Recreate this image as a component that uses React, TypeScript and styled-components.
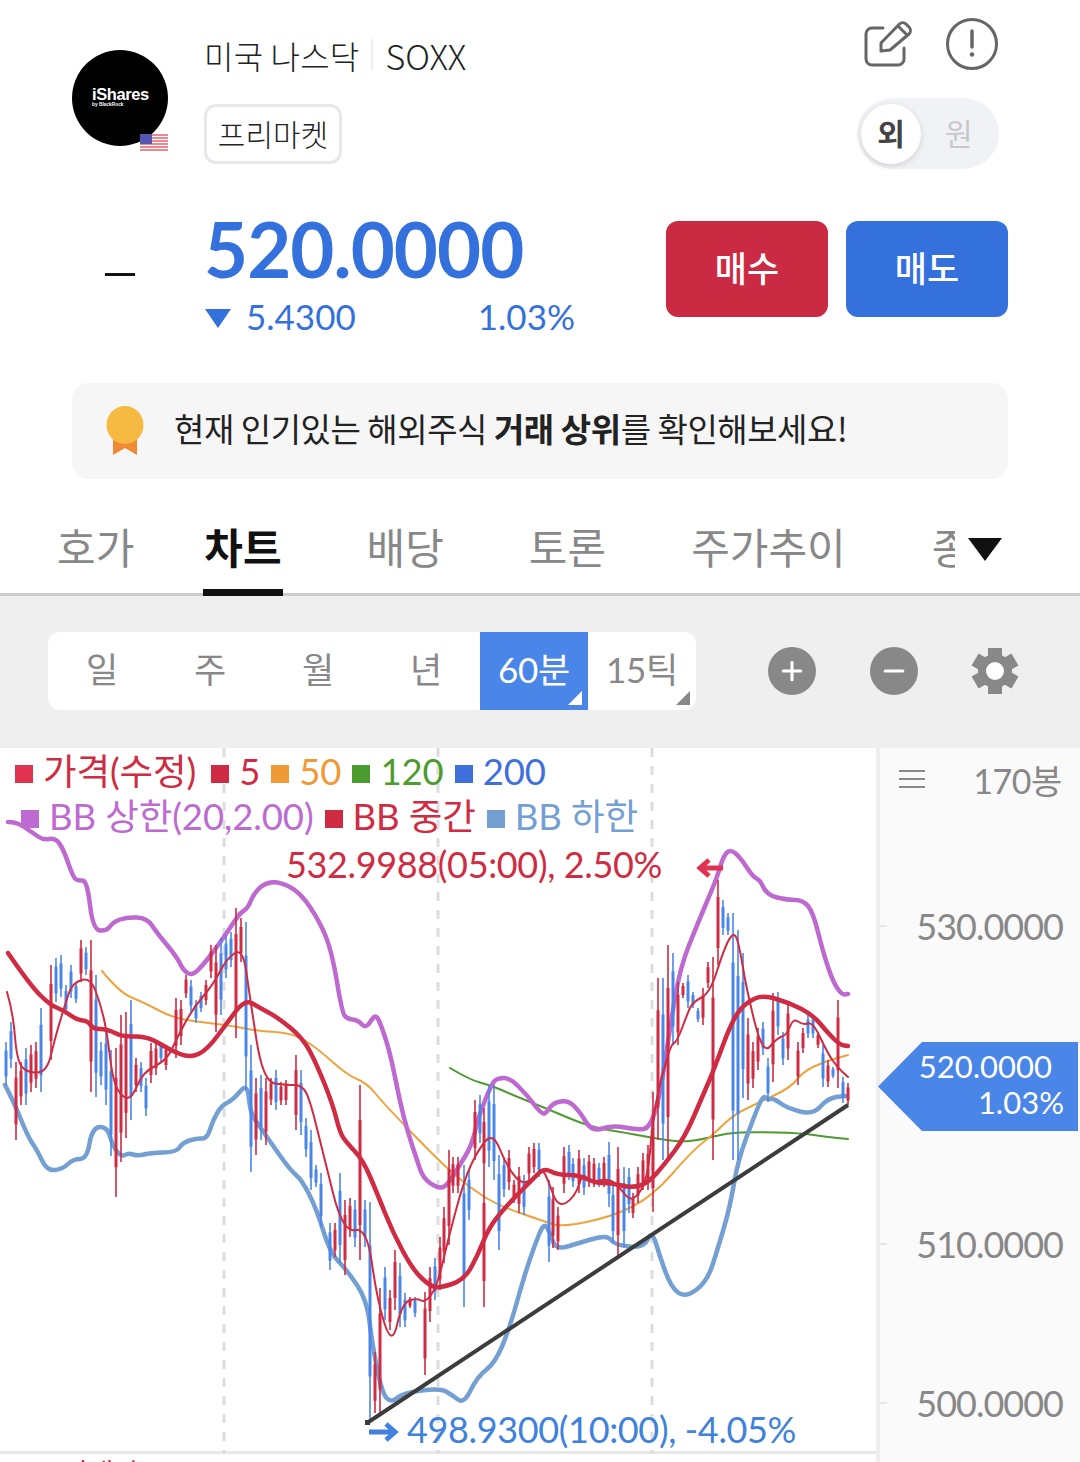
import styled, { createGlobalStyle } from 'styled-components';
import { Plus, Minus } from 'lucide-react';

const RED = '#cf2b43';
const BLUE = '#3471dc';
const SKY = '#4a86e8';
const GREY = '#888888';

const GlobalStyle = createGlobalStyle`
    html, body {
        margin: 0;
        padding: 0;
        background: #ffffff;
    }
    body {
        font-family: Lato, "Noto Sans CJK KR", sans-serif;
        color: #222222;
    }
    * {
        box-sizing: border-box;
    }
`;

const Page = styled.div`
    width: 1080px;
    height: 1462px;
    overflow: hidden;
    background: #ffffff;
`;

const TopSection = styled.section`
    padding: 0 72px;
`;

const HeaderRow = styled.div`
    display: flex;
    height: 170px;
`;

const Logo = styled.div`
    position: relative;
    width: 96px;
    height: 96px;
    margin-top: 50px;
    border-radius: 50%;
    background: #000000;
    color: #ffffff;
    display: flex;
    flex-direction: column;
    justify-content: center;
    padding: 0 0 3px 20px;
`;

const LogoName = styled.span`
    font-family: "Liberation Sans", sans-serif;
    font-weight: 700;
    font-size: 16.500px;
    line-height: 16px;
    letter-spacing: -0.4px;
`;

const LogoSub = styled.span`
    font-family: "Liberation Sans", sans-serif;
    font-weight: 700;
    font-size: 4.800px;
    line-height: 6px;
`;

const FlagBadge = styled.svg`
    position: absolute;
    right: 0;
    bottom: -5px;
    width: 28px;
    height: 17px;
`;

const Info = styled.div`
    margin-left: 36px;
    padding-top: 36px;
`;

const Title = styled.div`
    display: flex;
    align-items: center;
    height: 38px;
    font-family: "Noto Sans CJK KR", sans-serif;
    font-weight: 300;
    font-size: 32px;
    letter-spacing: 0.2px;
    color: #222222;
`;

const TitleCode = styled.span`
    font-size: 34px;
    letter-spacing: 0;
`;

const TitleDivider = styled.span`
    width: 2px;
    height: 32px;
    margin: 0 12px 0 12px;
    background: #eeeeee;
`;

const SessionTag = styled.div`
    display: inline-flex;
    align-items: center;
    justify-content: center;
    width: 138px;
    height: 60px;
    margin-top: 30px;
    padding-bottom: 3px;
    border: 3px solid #e8e8e8;
    border-radius: 12px;
    font-family: "Noto Sans CJK KR", sans-serif;
    font-weight: 300;
    font-size: 30px;
    letter-spacing: 0;
`;

const HeaderSide = styled.div`
    margin-left: auto;
    margin-right: 9px;
    padding-top: 17px;
    display: flex;
    flex-direction: column;
    align-items: flex-end;
`;

const IconRow = styled.div`
    display: flex;
    align-items: center;
    gap: 31px;
    height: 54px;
`;

const CurrencyToggle = styled.div`
    position: relative;
    display: flex;
    align-items: center;
    width: 142px;
    height: 71px;
    margin-top: 27px;
    padding-left: 4px;
    border-radius: 36px;
    background: #f1f2f5;
    font-family: "Noto Sans CJK KR", sans-serif;
    font-size: 30px;
`;

const ToggleKnob = styled.div`
    width: 60px;
    height: 60px;
    padding-bottom: 4px;
    border-radius: 50%;
    background: #ffffff;
    box-shadow: 0 2px 6px rgba(0, 0, 0, 0.14);
    display: flex;
    align-items: center;
    justify-content: center;
    font-weight: 700;
    color: #444444;
`;

const ToggleOff = styled.span`
    margin: 0 0 4px 24px;
    color: #c6c8cc;
`;

const PriceRow = styled.div`
    display: flex;
    margin-top: 51px;
    height: 96px;
`;

const FlatDash = styled.div`
    width: 30px;
    height: 3px;
    margin: 52px 69px 0 33px;
    background: #111111;
`;

const PriceBlock = styled.div`
    display: flex;
    flex-direction: column;
    color: ${BLUE};
`;

const Price = styled.div`
    font-weight: 700;
    font-size: 76px;
    line-height: 56px;
    letter-spacing: -0.9px;
`;

const Change = styled.div`
    display: flex;
    align-items: center;
    height: 40px;
    margin-top: 19px;
    font-size: 35px;
`;

const DownMark = styled.span`
    width: 0;
    height: 0;
    margin: 4px 15px 0 1px;
    border-left: 13px solid transparent;
    border-right: 13px solid transparent;
    border-top: 19px solid ${BLUE};
`;

const ChangeRate = styled.span`
    margin-left: 122px;
`;

const OrderButtons = styled.div`
    display: flex;
    gap: 18px;
    margin-left: auto;
`;

const OrderButton = styled.button<{ $color: string }>`
    width: 162px;
    height: 96px;
    padding: 0 0 6px;
    border: none;
    border-radius: 12px;
    background: ${(p) => p.$color};
    color: #ffffff;
    font-family: "Noto Sans CJK KR", sans-serif;
    font-weight: 500;
    font-size: 35px;
`;

const Banner = styled.div`
    display: flex;
    align-items: center;
    height: 96px;
    margin-top: 66px;
    padding-left: 34px;
    border-radius: 16px;
    background: #f6f6f6;
    font-family: "Noto Sans CJK KR", sans-serif;
    font-size: 33px;
    font-weight: 400;
    letter-spacing: -0.45px;
    color: #222222;
`;

const BannerText = styled.span`
    margin: 0 0 6px 28px;
    b {
        font-weight: 700;
    }
`;

const Tabs = styled.nav`
    position: relative;
    display: flex;
    align-items: flex-start;
    gap: 81px;
    height: 99px;
    margin-top: 18px;
    padding: 21px 0 0 55px;
    border-bottom: 3px solid #cccccc;
`;

const Tab = styled.div<{ $active?: boolean }>`
    height: 78px;
    padding: 0 ${(p) => (p.$active ? 1 : 2)}px;
    margin: 0 ${(p) => (p.$active ? 1 : 0)}px;
    white-space: nowrap;
    font-family: "Noto Sans CJK KR", sans-serif;
    font-weight: ${(p) => (p.$active ? 700 : 400)};
    font-size: 42px;
    line-height: 55px;
    color: ${(p) => (p.$active ? '#111111' : GREY)};
    border-bottom: ${(p) => (p.$active ? '7px solid #111111' : 'none')};
    &:first-child {
        margin-right: -15px;
    }
`;

const ClippedTab = styled(Tab)`
    width: 26px;
    overflow: hidden;
    padding: 0 0 0 3px;
`;

const MoreMark = styled.span`
    position: absolute;
    left: 968px;
    top: 41px;
    width: 0;
    height: 0;
    border-left: 17px solid transparent;
    border-right: 17px solid transparent;
    border-top: 23px solid #111111;
`;

const Toolbar = styled.div`
    display: flex;
    align-items: center;
    height: 152px;
    padding: 0 48px 2px;
    background: #efefef;
`;

const Periods = styled.div`
    display: flex;
    height: 78px;
    border-radius: 12px;
    background: #ffffff;
    overflow: hidden;
`;

const Period = styled.div<{ $active?: boolean; $menu?: boolean }>`
    position: relative;
    width: 108px;
    display: flex;
    align-items: center;
    justify-content: center;
    padding-bottom: 7px;
    font-family: Lato, "Noto Sans CJK KR", sans-serif;
    font-size: 35px;
    letter-spacing: -0.3px;
    background: ${(p) => (p.$active ? SKY : 'transparent')};
    color: ${(p) => (p.$active ? '#ffffff' : GREY)};
    &::after {
        content: '';
        display: ${(p) => (p.$menu ? 'block' : 'none')};
        position: absolute;
        right: 6px;
        bottom: 5px;
        width: 14px;
        height: 14px;
        background: ${(p) => (p.$active ? '#ffffff' : GREY)};
        clip-path: polygon(100% 0, 100% 100%, 0 100%);
    }
`;

const ZoomButton = styled.button<{ $gap: number }>`
    width: 48px;
    height: 48px;
    margin-left: ${(p) => p.$gap}px;
    padding: 0;
    border: none;
    border-radius: 50%;
    background: ${GREY};
    color: #ffffff;
    display: flex;
    align-items: center;
    justify-content: center;
`;

const GearSlot = styled.div`
    margin-left: 53px;
    height: 48px;
`;

const ChartArea = styled.div`
    display: flex;
    height: 714px;
`;

const ChartPane = styled.div`
    width: 876px;
    background: #ffffff;
`;

const Plot = styled.div`
    position: relative;
    height: 706px;
    border-bottom: 3px solid #e8e8e8;
`;

const PlotSvg = styled.svg`
    position: absolute;
    left: 0;
    top: 0;
    display: block;
`;

const Legend = styled.div`
    position: absolute;
    left: 15px;
    top: 1px;
    display: flex;
    flex-direction: column;
    font-size: 36.500px;
    line-height: 45px;
    letter-spacing: -0.1px;
`;

const LegendRow = styled.div<{ $indent?: number; $lead?: number }>`
    display: flex;
    gap: 11px;
    padding-left: ${(p) => p.$indent ?? 0}px;
    & > :first-child {
        margin-right: ${(p) => p.$lead ?? 0}px;
    }
`;

const LegendItem = styled.div<{ $color: string; $mark?: string }>`
    display: flex;
    align-items: center;
    gap: 10px;
    color: ${(p) => p.$color};
    white-space: nowrap;
    &::before {
        content: '';
        width: 18px;
        height: 18px;
        margin-top: 4px;
        background: ${(p) => p.$mark ?? p.$color};
    }
`;

const Extreme = styled.div<{ $color: string; $left: number; $top: number }>`
    position: absolute;
    left: ${(p) => p.$left}px;
    top: ${(p) => p.$top}px;
    color: ${(p) => p.$color};
    font-size: 36px;
    line-height: 44px;
    letter-spacing: -0.35px;
    white-space: nowrap;
`;

const SubPaneLabel = styled.div`
    margin: -2px 0 0 62px;
    font-family: "Noto Sans CJK KR", sans-serif;
    font-size: 28px;
    line-height: 40px;
    color: ${RED};
`;

const AxisPane = styled.div`
    position: relative;
    width: 204px;
    border-left: 4px solid #eeeeee;
    background: #fafafa;
    color: ${GREY};
`;

const AxisHead = styled.div`
    display: flex;
    align-items: center;
    height: 62px;
    padding: 0 18px 0 19px;
    justify-content: space-between;
    font-size: 34px;
    letter-spacing: -0.4px;
`;

const AxisLabel = styled.div<{ $y: number }>`
    position: absolute;
    right: 17px;
    top: ${(p) => p.$y - 23}px;
    font-size: 36px;
    line-height: 44px;
    letter-spacing: -1px;
`;

const AxisTick = styled.span<{ $y: number }>`
    position: absolute;
    left: 0;
    top: ${(p) => p.$y - 1}px;
    width: 7px;
    height: 2px;
    background: #e6e6e6;
`;

const PriceTag = styled.div`
    position: absolute;
    left: -2px;
    top: 294px;
    width: 200px;
    height: 89px;
    padding: 6px 14px 0 0;
    background: ${SKY};
    clip-path: polygon(0 50%, 44px 0, 100% 0, 100% 100%, 44px 100%);
    color: #ffffff;
    font-size: 31px;
    line-height: 36px;
    text-align: right;
`;

const PriceTagValue = styled.div`
    margin-right: 12px;
`;

type Candle = [number, number, number, 'r' | 'b'];

const candles: Candle[] = [
    [6, 1042, 1085, 'b'], [11, 1022, 1068, 'b'], [16, 1062, 1140, 'r'], [21, 1062, 1105, 'r'], [26, 1048, 1105, 'b'],
    [31, 1045, 1092, 'r'], [36, 1042, 1088, 'r'], [41, 1008, 1092, 'b'], [51, 965, 1060, 'r'], [56, 958, 1002, 'b'],
    [61, 955, 997, 'b'], [66, 985, 1015, 'b'], [71, 965, 998, 'b'], [76, 982, 1003, 'b'], [81, 940, 982, 'r'],
    [86, 947, 975, 'b'], [91, 940, 1092, 'r'], [96, 975, 1097, 'b'], [101, 1042, 1085, 'b'], [106, 1028, 1105, 'b'],
    [111, 1050, 1156, 'b'], [116, 1048, 1197, 'r'], [121, 1015, 1162, 'r'], [126, 1012, 1138, 'r'], [131, 1000, 1120, 'b'],
    [136, 1058, 1092, 'r'], [141, 1062, 1092, 'b'], [146, 1078, 1116, 'b'], [151, 1043, 1083, 'r'], [156, 1042, 1075, 'r'],
    [161, 1042, 1062, 'b'], [166, 1045, 1070, 'r'], [176, 998, 1058, 'r'], [181, 1000, 1045, 'r'], [186, 975, 998, 'r'],
    [191, 980, 1012, 'b'], [196, 1000, 1023, 'b'], [201, 992, 1012, 'b'], [206, 980, 1005, 'r'], [211, 945, 978, 'r'],
    [216, 945, 1032, 'r'], [221, 938, 1015, 'b'], [226, 935, 978, 'b'], [231, 932, 967, 'b'], [236, 908, 1038, 'r'],
    [241, 918, 962, 'r'], [246, 922, 1090, 'b'], [251, 1045, 1172, 'b'], [256, 1078, 1155, 'r'], [261, 1075, 1140, 'b'],
    [266, 1078, 1145, 'r'], [271, 1078, 1105, 'r'], [276, 1070, 1110, 'b'], [281, 1082, 1105, 'r'], [286, 1080, 1105, 'r'],
    [296, 1055, 1130, 'r'], [301, 1070, 1135, 'b'], [306, 1118, 1157, 'b'], [311, 1130, 1190, 'b'], [316, 1165, 1187, 'b'],
    [321, 1173, 1227, 'b'], [330, 1223, 1270, 'b'], [335, 1223, 1257, 'r'], [340, 1173, 1263, 'b'], [345, 1200, 1275, 'r'],
    [350, 1198, 1237, 'r'], [355, 1200, 1247, 'b'], [360, 1085, 1260, 'r'], [365, 1200, 1247, 'b'], [370, 1202, 1420, 'b'],
    [375, 1352, 1413, 'r'], [380, 1288, 1415, 'r'], [385, 1267, 1320, 'b'], [390, 1290, 1330, 'r'], [395, 1250, 1310, 'r'],
    [400, 1263, 1327, 'b'], [405, 1293, 1327, 'b'], [410, 1297, 1308, 'r'], [415, 1297, 1317, 'b'], [425, 1292, 1375, 'r'],
    [430, 1267, 1322, 'r'], [435, 1258, 1300, 'b'], [440, 1237, 1290, 'r'], [444, 1207, 1263, 'r'], [449, 1150, 1245, 'r'],
    [453, 1157, 1193, 'r'], [458, 1157, 1193, 'r'], [464, 1165, 1307, 'b'], [469, 1170, 1220, 'b'], [475, 1100, 1160, 'r'],
    [480, 1095, 1143, 'b'], [484, 1177, 1307, 'r'], [484, 1108, 1177, 'r'], [489, 1085, 1167, 'b'], [494, 1085, 1180, 'b'],
    [499, 1155, 1250, 'b'], [504, 1157, 1197, 'b'], [509, 1150, 1190, 'r'], [514, 1180, 1203, 'r'], [519, 1167, 1213, 'r'],
    [524, 1175, 1215, 'b'], [529, 1147, 1180, 'r'], [534, 1143, 1173, 'r'], [539, 1143, 1177, 'b'], [549, 1180, 1262, 'b'],
    [553, 1187, 1248, 'r'], [558, 1207, 1250, 'r'], [564, 1147, 1193, 'r'], [569, 1145, 1180, 'b'], [573, 1158, 1187, 'b'],
    [579, 1150, 1193, 'r'], [584, 1158, 1195, 'b'], [589, 1155, 1187, 'r'], [594, 1158, 1187, 'r'], [599, 1163, 1187, 'b'],
    [604, 1157, 1187, 'r'], [609, 1142, 1207, 'b'], [613, 1183, 1243, 'b'], [618, 1147, 1257, 'r'], [624, 1167, 1247, 'b'],
    [629, 1168, 1213, 'b'], [633, 1193, 1218, 'r'], [638, 1167, 1203, 'r'], [643, 1153, 1190, 'r'], [648, 1145, 1190, 'r'],
    [653, 1092, 1212, 'r'], [658, 978, 1140, 'r'], [663, 978, 1160, 'b'], [668, 945, 1160, 'r'], [673, 953, 1045, 'b'],
    [678, 982, 1045, 'r'], [683, 983, 998, 'r'], [688, 975, 1008, 'b'], [693, 992, 1008, 'b'], [698, 1008, 1022, 'b'],
    [703, 988, 1025, 'r'], [708, 962, 988, 'r'], [713, 957, 1160, 'r'], [718, 880, 965, 'r'], [723, 900, 935, 'b'],
    [728, 913, 935, 'b'], [733, 913, 1160, 'b'], [738, 930, 1160, 'b'], [743, 953, 1098, 'b'], [748, 1018, 1100, 'r'],
    [753, 1042, 1088, 'r'], [758, 1028, 1070, 'r'], [763, 1022, 1055, 'b'], [768, 1058, 1102, 'b'], [773, 993, 1082, 'r'],
    [778, 992, 1035, 'b'], [783, 1032, 1065, 'b'], [788, 1002, 1060, 'r'], [798, 1042, 1085, 'r'], [803, 1028, 1053, 'r'],
    [808, 1015, 1038, 'b'], [813, 1015, 1038, 'b'], [818, 1032, 1048, 'r'], [823, 1045, 1087, 'b'], [828, 1060, 1087, 'r'],
    [833, 1067, 1078, 'b'], [838, 1000, 1088, 'r'], [843, 1077, 1103, 'b'], [848, 1083, 1105, 'r'],
];

const bbUpper = '8,822 17,822 33,833 43,840 55,838 63,848 73,877 78,881 87,880 93,930 107,931 113,922 127,917 147,918 157,933 177,957 183,970 192,976 203,965 217,947 230,928 240,913 248,908 253,895 263,884 278,881 300,892 320,922 332,952 342,1012 347,1019 358,1020 366,1029 375,1014 380,1022 390,1052 400,1102 408,1133 417,1160 423,1178 437,1188 446,1187 458,1168 472,1145 478,1118 492,1083 498,1078 510,1078 527,1095 542,1115 547,1112 553,1103 568,1100 580,1112 592,1132 613,1125 637,1130 650,1128 660,1095 670,1028 680,968 697,925 717,878 723,857 730,849 740,857 753,877 760,880 767,895 787,900 803,900 813,912 823,952 833,982 842,995 848,994';
const bbMiddle = '8,953 30,985 50,1005 63,1010 77,1020 88,1021 93,1029 107,1029 123,1037 147,1036 170,1050 190,1058 207,1050 227,1023 245,999 260,1008 277,1017 303,1038 317,1065 333,1105 340,1133 347,1143 363,1160 377,1193 393,1233 413,1270 430,1286 440,1288 464,1280 477,1257 489,1227 509,1203 534,1178 544,1168 558,1175 579,1175 595,1183 611,1183 632,1188 648,1183 664,1165 685,1137 703,1095 713,1072 733,1018 747,1002 763,995 790,1003 813,1015 827,1032 840,1045 848,1046';
const bbLower = '5,1085 13,1100 28,1137 37,1150 47,1171 63,1169 73,1159 87,1159 92,1128 107,1126 113,1147 122,1157 128,1153 138,1156 150,1153 177,1152 182,1143 197,1138 207,1139 213,1120 222,1105 233,1100 247,1083 250,1108 253,1117 267,1137 290,1170 302,1180 317,1210 330,1253 347,1270 367,1300 372,1343 382,1393 391,1403 403,1393 440,1388 452,1395 464,1404 477,1377 495,1363 509,1330 524,1277 534,1247 544,1222 550,1233 556,1250 579,1243 599,1237 609,1237 615,1245 644,1248 652,1230 660,1257 671,1287 685,1298 707,1282 718,1248 730,1207 738,1160 754,1117 763,1095 768,1100 773,1098 787,1108 813,1115 828,1098 845,1096';
const ma5 = '7,992 13,1012 17,1062 28,1073 47,1072 55,1038 67,998 73,983 90,977 100,1002 107,1032 113,1082 123,1098 132,1098 143,1072 167,1060 177,1038 193,1008 213,985 227,958 243,948 250,998 263,1082 287,1085 302,1085 310,1100 323,1153 343,1233 367,1227 377,1300 392,1347 402,1303 417,1298 425,1303 437,1287 448,1240 464,1180 478,1150 493,1132 507,1167 524,1187 542,1168 548,1180 558,1208 575,1197 583,1172 589,1183 609,1178 620,1188 632,1203 648,1180 653,1112 670,1045 677,1042 688,1012 693,1002 710,993 723,952 732,933 738,938 747,992 763,1055 777,1038 787,1035 793,1018 803,1025 813,1022 827,1052 837,1067 848,1077';
const ma50 = '102,971 120,993 143,1002 173,1018 200,1022 233,1026 257,1031 293,1033 317,1048 347,1075 367,1083 383,1103 440,1162 469,1187 497,1205 546,1222 562,1227 611,1217 652,1197 693,1150 713,1135 733,1115 760,1102 790,1088 803,1072 823,1062 848,1055';
const ma120 = '450,1068 470,1080 490,1085 513,1095 550,1110 590,1127 627,1133 653,1138 680,1142 700,1140 727,1133 753,1132 800,1133 827,1137 848,1139';

// round the corners of a point list, the lines in the chart are not angular
function smooth(points: string) {
    const pts = points.split(' ').map((p) => p.split(',').map(Number));
    let d = `M${pts[0][0]} ${pts[0][1]}`;
    for (let i = 1; i < pts.length - 1; i++) {
        const mx = (pts[i][0] + pts[i + 1][0]) / 2;
        const my = (pts[i][1] + pts[i + 1][1]) / 2;
        d += `Q${pts[i][0]} ${pts[i][1]} ${mx} ${my}`;
    }
    const last = pts[pts.length - 1];
    return `${d}L${last[0]} ${last[1]}`;
}

function CandleBars() {
    return (
        <g>
            {candles.map(([x, hi, lo, dir], i) => {
                const color = dir === 'r' ? RED : SKY;
                const inset = (lo - hi) * 0.2;
                return (
                    <g key={i} stroke={color}>
                        <line x1={x} x2={x} y1={hi} y2={lo} strokeWidth={1.6} />
                        <line x1={x} x2={x} y1={hi + inset} y2={lo - inset} strokeWidth={3} />
                    </g>
                );
            })}
        </g>
    );
}

function PriceChart() {
    return (
        <PlotSvg width={876} height={706} viewBox="0 748 876 706">
            <g stroke="#dddddd" strokeWidth={3} strokeDasharray="9 9">
                <line x1={224} x2={224} y1={748} y2={1454} />
                <line x1={438} x2={438} y1={748} y2={1454} />
                <line x1={652} x2={652} y1={748} y2={1454} />
            </g>
            <g fill="none" strokeLinejoin="round" strokeLinecap="round">
                <path d={smooth(ma120)} stroke="#4d9a30" strokeWidth={2} />
                <path d={smooth(ma50)} stroke="#eda440" strokeWidth={2} />
                <path d={smooth(bbLower)} stroke="#749fd2" strokeWidth={4.5} />
                <path d={smooth(bbUpper)} stroke="#bd69cf" strokeWidth={4.5} />
            </g>
            <CandleBars />
            <g fill="none" strokeLinejoin="round" strokeLinecap="round">
                <path d={smooth(ma5)} stroke={RED} strokeWidth={2} />
                <path d={smooth(bbMiddle)} stroke={RED} strokeWidth={4.5} />
            </g>
            <line x1={367} y1={1423} x2={848} y2={1105} stroke="#3c3c3c" strokeWidth={4} />
            <rect x={365} y={1420} width={5} height={5} fill="#3c3c3c" />
            <path d="M723 868H700M709 860l-9 8 9 8" fill="none" stroke="#e0334f" strokeWidth={5} />
            <path d="M369 1432h25M386 1424l9 8-9 8" fill="none" stroke="#3f82dc" strokeWidth={5} />
        </PlotSvg>
    );
}

function GearIcon() {
    return (
        <svg width={48} height={48} viewBox="0 0 48 48" fill={GREY}>
            <circle cx={24} cy={24} r={17} />
            {[0, 60, 120, 180, 240, 300].map((a) => (
                <rect key={a} x={17} y={1} width={14} height={11} transform={`rotate(${a} 24 24)`} />
            ))}
            <circle cx={24} cy={24} r={9} fill="#ffffff" />
        </svg>
    );
}

export default function App() {
    return (
        <Page>
            <GlobalStyle />
            <TopSection>
                <HeaderRow>
                    <Logo>
                        <LogoName>iShares</LogoName>
                        <LogoSub>by BlackRock</LogoSub>
                        <FlagBadge viewBox="0 0 28 17">
                            <rect width={28} height={17} fill="#ffffff" />
                            <path d="M0 1h28M0 4h28M0 7h28M0 10h28M0 13h28M0 16h28" stroke="#e8626c" strokeWidth={1.4} />
                            <rect width={12} height={10} fill="#5458b0" />
                        </FlagBadge>
                    </Logo>
                    <Info>
                        <Title>
                            미국 나스닥<TitleDivider /><TitleCode>SOXX</TitleCode>
                        </Title>
                        <SessionTag>프리마켓</SessionTag>
                    </Info>
                    <HeaderSide>
                        <IconRow>
                            <svg width={50} height={50} viewBox="0 0 50 50" fill="none" stroke="#666666" strokeWidth={3} strokeLinecap="round" strokeLinejoin="round">
                                <path d="M19 9H8a6 6 0 0 0-6 6v25a6 6 0 0 0 6 6h26a6 6 0 0 0 6-6V29" />
                                <path d="M17 24L35 5.500a5 5 0 0 1 7-.5l3 3a5 5 0 0 1 0 7L26 31l-9 1z" />
                                <path d="M34 7l9 9" />
                            </svg>
                            <svg width={54} height={54} viewBox="0 0 54 54" fill="none" stroke="#666666" strokeWidth={3}>
                                <circle cx={27} cy={27} r={24.500} />
                                <path d="M27 14v16" strokeWidth={3.500} strokeLinecap="round" />
                                <circle cx={27} cy={37.500} r={2.200} fill="#666666" stroke="none" />
                            </svg>
                        </IconRow>
                        <CurrencyToggle>
                            <ToggleKnob>외</ToggleKnob>
                            <ToggleOff>원</ToggleOff>
                        </CurrencyToggle>
                    </HeaderSide>
                </HeaderRow>
                <PriceRow>
                    <FlatDash />
                    <PriceBlock>
                        <Price>520.0000</Price>
                        <Change>
                            <DownMark />
                            5.4300
                            <ChangeRate>1.03%</ChangeRate>
                        </Change>
                    </PriceBlock>
                    <OrderButtons>
                        <OrderButton $color="#cb2a43">매수</OrderButton>
                        <OrderButton $color={BLUE}>매도</OrderButton>
                    </OrderButtons>
                </PriceRow>
                <Banner>
                    <svg width={40} height={50} viewBox="0 0 40 50">
                        <path d="M7 28v21l12-7 12 7V28z" fill="#f08a34" />
                        <ellipse cx={19} cy={19} rx={18.500} ry={19} fill="#f6ba42" />
                    </svg>
                    <BannerText>
                        현재 인기있는 해외주식 <b>거래 상위</b>를 확인해보세요!
                    </BannerText>
                </Banner>
            </TopSection>
            <Tabs>
                <Tab>호가</Tab>
                <Tab $active>차트</Tab>
                <Tab>배당</Tab>
                <Tab>토론</Tab>
                <Tab>주가추이</Tab>
                <ClippedTab>종목정보</ClippedTab>
                <MoreMark />
            </Tabs>
            <Toolbar>
                <Periods>
                    <Period>일</Period>
                    <Period>주</Period>
                    <Period>월</Period>
                    <Period>년</Period>
                    <Period $active $menu>60분</Period>
                    <Period $menu>15틱</Period>
                </Periods>
                <ZoomButton $gap={72}><Plus size={30} strokeWidth={2.5} /></ZoomButton>
                <ZoomButton $gap={54}><Minus size={30} strokeWidth={2.5} /></ZoomButton>
                <GearSlot><GearIcon /></GearSlot>
            </Toolbar>
            <ChartArea>
                <ChartPane>
                    <Plot>
                        <PriceChart />
                        <Legend>
                            <LegendRow $lead={4}>
                                <LegendItem $color={RED} $mark="#e0334f">가격(수정)</LegendItem>
                                <LegendItem $color={RED}>5</LegendItem>
                                <LegendItem $color="#ef9a35">50</LegendItem>
                                <LegendItem $color="#4b9c2e">120</LegendItem>
                                <LegendItem $color="#3f6fdc">200</LegendItem>
                            </LegendRow>
                            <LegendRow $indent={6}>
                                <LegendItem $color="#bd6bd0">BB 상한(20,2.00)</LegendItem>
                                <LegendItem $color={RED}>BB 중간</LegendItem>
                                <LegendItem $color="#749fd2">BB 하한</LegendItem>
                            </LegendRow>
                        </Legend>
                        <Extreme $color={RED} $left={286} $top={94}>532.9988(05:00), 2.50%</Extreme>
                        <Extreme $color="#3f82dc" $left={407} $top={659}>498.9300(10:00), -4.05%</Extreme>
                    </Plot>
                    <SubPaneLabel>거래량</SubPaneLabel>
                </ChartPane>
                <AxisPane>
                    <AxisHead>
                        <svg width={26} height={20} viewBox="0 0 26 20" stroke={GREY} strokeWidth={2}>
                            <path d="M0 2h26M0 10h26M0 18h26" />
                        </svg>
                        170봉
                    </AxisHead>
                    <AxisTick $y={178} />
                    <AxisTick $y={496} />
                    <AxisTick $y={655} />
                    <AxisLabel $y={179}>530.0000</AxisLabel>
                    <AxisLabel $y={497}>510.0000</AxisLabel>
                    <AxisLabel $y={656}>500.0000</AxisLabel>
                    <PriceTag>
                        <PriceTagValue>520.0000</PriceTagValue>
                        1.03%
                    </PriceTag>
                </AxisPane>
            </ChartArea>
        </Page>
    );
}
